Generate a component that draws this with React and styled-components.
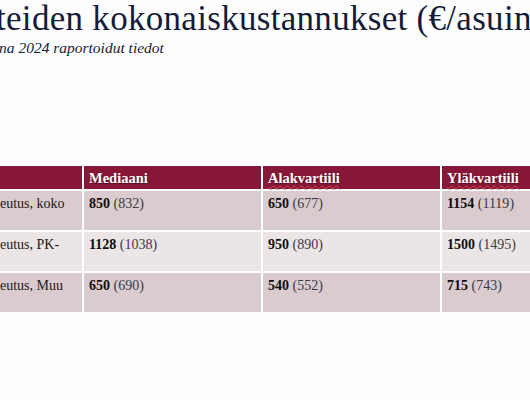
import styled, { createGlobalStyle } from "styled-components";

const GlobalStyle = createGlobalStyle`
  html, body {
    margin: 0;
    padding: 0;
    background: #fefefe;
  }
`;

const rows = [
  { label: "eutus, koko", cells: [["850", "832"], ["650", "677"], ["1154", "1119"]] },
  { label: "eutus, PK-", cells: [["1128", "1038"], ["950", "890"], ["1500", "1495"]] },
  { label: "eutus, Muu", cells: [["650", "690"], ["540", "552"], ["715", "743"]] },
];

const headers = ["Mediaani", "Alakvartiili", "Yläkvartiili"];

const App = () => {
  return (
    <Slide>
      <GlobalStyle />
      <Title>teiden kokonaiskustannukset (€/asuin</Title>
      <Subtitle>na 2024 raportoidut tiedot</Subtitle>
      <Table>
        <HeadCell />
        {headers.map((h, i) => (
          <HeadCell key={h}>
            <HeadText $spell={i > 0}>{h}</HeadText>
          </HeadCell>
        ))}
        {rows.map((row, r) => [
          <Cell key={"l" + r} $alt={r % 2 === 1}>
            <Label>{row.label}</Label>
          </Cell>,
          ...row.cells.map(([main, prev], c) => (
            <Cell key={r + "-" + c} $alt={r % 2 === 1}>
              <Value>{main}</Value> <Prev>({prev})</Prev>
            </Cell>
          )),
        ])}
      </Table>
    </Slide>
  );
};

export default App;

const Slide = styled.div`
  width: 530px;
  height: 400px;
  overflow: hidden;
  background: #fefefe;
  font-family: "Liberation Serif", "Times New Roman", serif;
`;

const Title = styled.h1`
  margin: 0 0 0 -4px;
  font-weight: normal;
  font-size: 35px;
  line-height: 38px;
  letter-spacing: 0.3px;
  color: #141c3a;
  white-space: nowrap;
`;

const Subtitle = styled.div`
  margin: 1px 0 0 -1px;
  font-style: italic;
  font-size: 15.5px;
  line-height: 17px;
  color: #141c3a;
  white-space: nowrap;
`;

const Table = styled.div`
  display: grid;
  grid-template-columns: 82px 177px 177px 177px;
  grid-template-rows: 23px 39px 39px 39px;
  gap: 2px 2px;
  margin-top: 110px;
  width: 620px;
`;

const HeadCell = styled.div`
  background: #881838;
  padding: 4px 5px 0;
  display: flex;
  align-items: flex-start;
`;

const HeadText = styled.span`
  color: #ffffff;
  font-weight: bold;
  font-size: 14.5px;
  line-height: 16px;
  text-shadow: 1px 1px 1px rgba(0, 0, 0, 0.35);
  text-decoration: ${(p) => (p.$spell ? "underline wavy #e0485a" : "none")};
  text-decoration-thickness: 1px;
  text-underline-offset: 2px;
`;

const Cell = styled.div`
  background: ${(p) => (p.$alt ? "#ece5e6" : "#dacbce")};
  padding: 5px 5px 0;
  font-size: 14px;
  line-height: 16px;
  color: #111;
  white-space: nowrap;
  overflow: hidden;
`;

const Label = styled.span`
  display: block;
  margin-left: -5px;
  color: #1a1a1a;
`;

const Value = styled.b`
  color: #0d0d0d;
`;

const Prev = styled.span`
  color: #363a4a;
`;
